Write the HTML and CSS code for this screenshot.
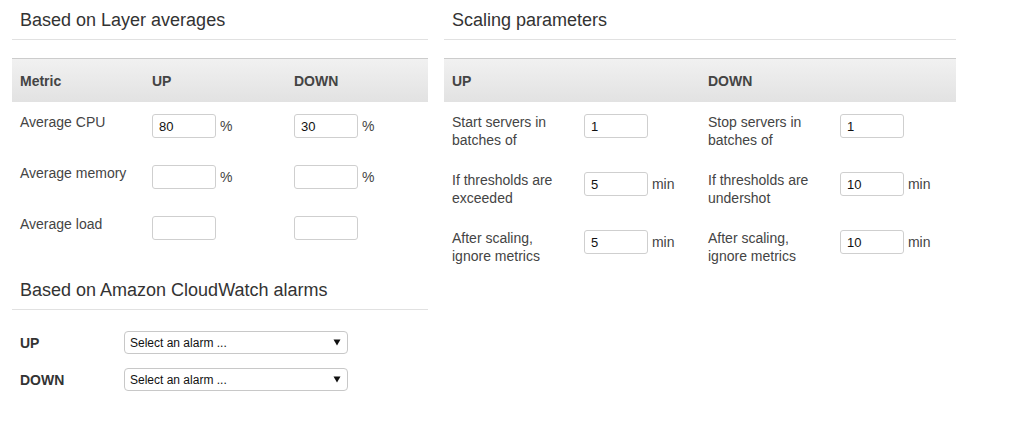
FILE: index.html
```html
<!DOCTYPE html>
<html>
<head>
<meta charset="utf-8">
<link rel="stylesheet" href="styles.css">
</head>
<body>
<div class="page">
  <section class="col col-left">
    <h2 class="title">Based on Layer averages</h2>
    <div class="grid grid-left">
      <div class="head">Metric</div>
      <div class="head">UP</div>
      <div class="head">DOWN</div>

      <div class="cell label">Average CPU</div>
      <div class="cell field"><input class="inp" type="text" value="80"> <span class="unit">%</span></div>
      <div class="cell field"><input class="inp" type="text" value="30"> <span class="unit">%</span></div>

      <div class="cell label">Average memory</div>
      <div class="cell field"><input class="inp" type="text" value=""> <span class="unit">%</span></div>
      <div class="cell field"><input class="inp" type="text" value=""> <span class="unit">%</span></div>

      <div class="cell label">Average load</div>
      <div class="cell field"><input class="inp" type="text" value=""></div>
      <div class="cell field"><input class="inp" type="text" value=""></div>
    </div>

    <h2 class="title title-2">Based on Amazon CloudWatch alarms</h2>
    <div class="alarms">
      <div class="alarm-row">
        <div class="alarm-label">UP</div>
        <div class="select"><span>Select an alarm ...</span><svg width="8" height="7" viewBox="0 0 8 7"><path d="M0.5 0.5h7L4 6.5z" fill="#111"/></svg></div>
      </div>
      <div class="alarm-row">
        <div class="alarm-label">DOWN</div>
        <div class="select"><span>Select an alarm ...</span><svg width="8" height="7" viewBox="0 0 8 7"><path d="M0.5 0.5h7L4 6.5z" fill="#111"/></svg></div>
      </div>
    </div>
  </section>

  <section class="col col-right">
    <h2 class="title">Scaling parameters</h2>
    <div class="grid grid-right">
      <div class="head span2">UP</div>
      <div class="head span2">DOWN</div>

      <div class="cell label wrap first">Start servers in batches of</div>
      <div class="cell field"><input class="inp" type="text" value="1"></div>
      <div class="cell label wrap">Stop servers in batches of</div>
      <div class="cell field"><input class="inp" type="text" value="1"></div>

      <div class="cell label wrap first">If thresholds are exceeded</div>
      <div class="cell field"><input class="inp" type="text" value="5"> <span class="unit">min</span></div>
      <div class="cell label wrap">If thresholds are undershot</div>
      <div class="cell field"><input class="inp" type="text" value="10"> <span class="unit">min</span></div>

      <div class="cell label wrap first">After scaling, ignore metrics</div>
      <div class="cell field"><input class="inp" type="text" value="5"> <span class="unit">min</span></div>
      <div class="cell label wrap">After scaling, ignore metrics</div>
      <div class="cell field"><input class="inp" type="text" value="10"> <span class="unit">min</span></div>
    </div>
  </section>
</div>
</body>
</html>
```

FILE: styles.css
```css
* { box-sizing: border-box; }
html, body {
  margin: 0;
  padding: 0;
  background: #fff;
}
body {
  font-family: "Liberation Sans", Arial, sans-serif;
  font-size: 14px;
  line-height: 18px;
  color: #444;
}
.page {
  display: flex;
  gap: 16px;
  padding-left: 12px;
}
.col-left { width: 416px; }
.col-right { width: 512px; }

.title {
  margin: 0;
  padding: 10px 8px 9px;
  font-size: 18px;
  line-height: 20px;
  font-weight: normal;
  color: #333;
  border-bottom: 1px solid #e1e1e1;
}
.title-2 { margin-top: 15px; }

.grid {
  display: grid;
  margin-top: 18px;
}
.grid-left { grid-template-columns: 140px 142px 1fr; }
.grid-right { grid-template-columns: 140px 124px 132px 1fr; }

.head {
  height: 44px;
  display: flex;
  align-items: center;
  font-weight: bold;
  color: #444;
  background: linear-gradient(#f1f1f1, #e2e2e2);
  border-top: 1px solid #cccccc;
}
.head:first-child { padding-left: 8px; }
.span2 { grid-column: span 2; }

.cell {
  height: 51px;
  padding-top: 11px;
}
.grid-right .cell { height: 58px; }
.label { padding-left: 8px; }
.grid-right .label { padding-left: 0; padding-right: 16px; }
.grid-right .label.first { padding-left: 8px; padding-right: 16px; }
.field { padding-top: 12px; }

.inp {
  width: 64px;
  height: 24px;
  margin: 0;
  padding: 0 6px;
  border: 1px solid #cfcfcf;
  border-radius: 3px;
  font-family: "Liberation Sans", Arial, sans-serif;
  font-size: 13px;
  color: #111;
  background: #fff;
  vertical-align: baseline;
}
.unit { color: #444; }

.alarms {
  padding-top: 21px;
  display: flex;
  flex-direction: column;
  gap: 14px;
}
.alarm-row {
  display: flex;
  align-items: center;
}
.alarm-label {
  width: 112px;
  padding-left: 8px;
  font-weight: bold;
  color: #333;
}
.select {
  width: 224px;
  height: 23px;
  border: 1px solid #c8c8c8;
  border-radius: 4px;
  display: flex;
  align-items: center;
  justify-content: space-between;
  padding: 0 6px 0 5px;
  font-size: 12px;
  color: #111;
  background: #fff;
}
```
